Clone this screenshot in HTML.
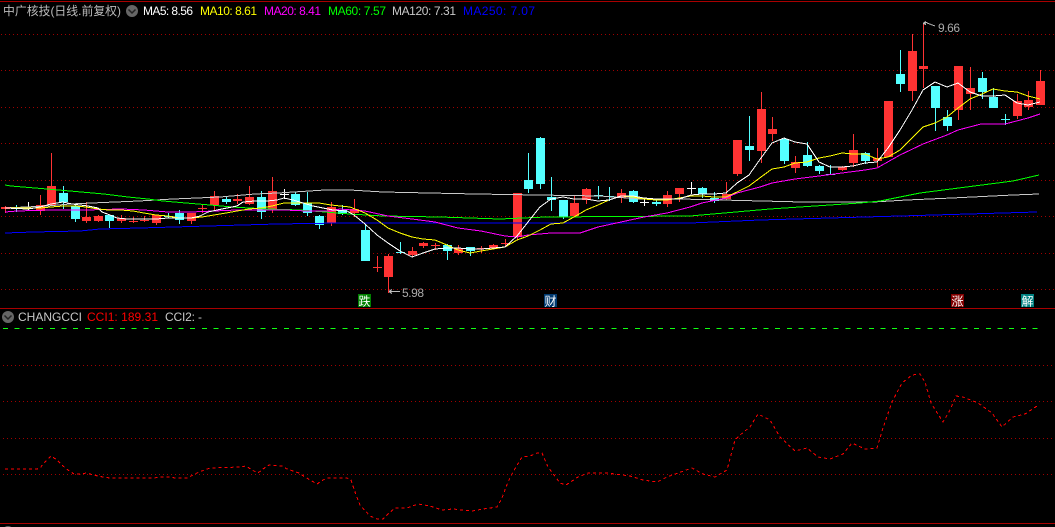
<!DOCTYPE html>
<html><head><meta charset="utf-8"><style>
html,body{margin:0;padding:0;background:#000;width:1055px;height:527px;overflow:hidden}
svg{display:block}
text{font-family:"Liberation Sans","WenQuanYi Zen Hei","Noto Sans CJK SC",sans-serif;font-size:12px}
.l{fill:none;stroke-width:1;shape-rendering:crispEdges}
</style></head><body>
<svg width="1055" height="527" viewBox="0 0 1055 527" xmlns="http://www.w3.org/2000/svg">
<rect width="1055" height="527" fill="#000"/>
<g shape-rendering="crispEdges">
<path d="M0 1.5H1055M0 308.5H1055M0 523.5H1055" stroke="#a80000" stroke-width="1" fill="none"/>
<path d="M1 34.5H1055M1 70.5H1055M1 107.5H1055M1 143.5H1055M1 180.5H1055M1 216.5H1055M1 253.5H1055M1 289.5H1055M3 365.5H1055M3 401.5H1055M3 438.5H1055M3 474.5H1055" stroke="#a00000" stroke-width="1" stroke-dasharray="1 3" fill="none"/>
<path d="M3 328.5H1042" stroke="#11ff11" stroke-width="1" stroke-dasharray="5 6.7" fill="none"/>

<path fill="none" stroke="#ff3333" stroke-width="1" d="M5.5 206V213M40.5 195V215M51.5 153V205M86.5 202V223M98.5 215V222M121.5 215V223M133.5 217V223M144.5 216V222M156.5 215V225M191.5 213V224M202.5 204V213M214.5 191V210M237.5 194V204M249.5 186V205M272.5 177V213M331.5 202V226M354.5 199V217M377.5 256V272M388.5 254V293M412.5 247V257M423.5 242V248M435.5 243V250M458.5 245V255M481.5 246V253M493.5 244V249M505.5 239V247M517.5 193V240M574.5 195V217M586.5 188V204M621.5 189V203M667.5 191V207M679.5 188V202M726.5 182V200M737.5 140V176M761.5 92V163M772.5 117V141M795.5 156V173M842.5 166V171M853.5 134V167M877.5 148V167M888.5 101V157M912.5 34V101M923.5 23V88M958.5 66V120M970.5 67V110M1017.5 94V119M1028.5 91V110M1040.5 70V105"/>
<path fill="#ff3333" d="M1 207h9v2h-9zM36 205h9v6h-9zM47 186h9v19h-9zM82 217h9v4h-9zM94 216h9v5h-9zM117 218h9v3h-9zM152 215h9v8h-9zM187 213h9v8h-9zM210 196h9v9h-9zM233 199h9v2h-9zM245 197h9v7h-9zM268 191h9v18h-9zM327 207h9v16h-9zM350 209h9v4h-9zM384 256h9v21h-9zM408 251h9v4h-9zM419 243h9v3h-9zM454 248h9v5h-9zM489 245h9v3h-9zM513 193h9v44h-9zM570 203h9v13h-9zM582 189h9v11h-9zM617 193h9v5h-9zM663 195h9v9h-9zM675 188h9v6h-9zM722 194h9v5h-9zM733 140h9v34h-9zM757 109h9v42h-9zM768 129h9v5h-9zM791 162h9v6h-9zM838 167h9v3h-9zM849 150h9v13h-9zM873 158h9v3h-9zM884 101h9v56h-9zM908 51h9v40h-9zM919 66h9v3h-9zM954 66h9v44h-9zM966 88h9v6h-9zM1013 101h9v15h-9zM1024 100h9v7h-9zM1036 81h9v24h-9z
M129 221h9v1h-9zM140 220h9v1h-9zM198 208h9v1h-9zM373 267h9v1h-9zM431 245h9v1h-9zM477 248h9v1h-9zM501 243h9v1h-9z"/>

<path fill="none" stroke="#54ffff" stroke-width="1" d="M16.5 205V212M63.5 186V209M75.5 205V222M109.5 215V228M168.5 213V218M179.5 210V224M226.5 197V204M261.5 191V219M295.5 192V206M307.5 192V216M319.5 215V229M342.5 205V215M365.5 224V261M400.5 242V254M447.5 244V260M470.5 247V256M528.5 153V193M540.5 137V189M551.5 177V211M563.5 200V219M598.5 186V199M609.5 187V201M633.5 190V203M656.5 199V206M702.5 187V198M714.5 192V203M749.5 116V161M784.5 138V164M807.5 142V167M819.5 165V174M830.5 165V175M865.5 152V164M900.5 50V92M935.5 86V131M947.5 110V131M982.5 72V99M993.5 88V108M1005.5 114V125"/>
<path fill="#54ffff" d="M59 193h9v9h-9zM71 206h9v13h-9zM105 215h9v6h-9zM175 213h9v7h-9zM222 199h9v3h-9zM257 197h9v15h-9zM291 194h9v11h-9zM303 203h9v10h-9zM315 216h9v9h-9zM338 210h9v4h-9zM361 230h9v31h-9zM443 245h9v6h-9zM466 247h9v4h-9zM524 180h9v9h-9zM536 138h9v46h-9zM547 197h9v3h-9zM559 200h9v17h-9zM629 191h9v11h-9zM652 202h9v2h-9zM698 188h9v6h-9zM710 198h9v3h-9zM745 146h9v4h-9zM780 139h9v22h-9zM803 155h9v11h-9zM815 166h9v5h-9zM861 153h9v8h-9zM896 74h9v10h-9zM931 86h9v22h-9zM943 117h9v9h-9zM978 78h9v14h-9zM989 97h9v11h-9z
M12 208h9v1h-9zM164 216h9v1h-9zM396 252h9v1h-9zM594 195h9v1h-9zM605 196h9v1h-9zM826 174h9v1h-9zM1001 119h9v1h-9z"/>

<path fill="none" stroke="#fff" stroke-width="1" d="M28.5 202V211M24 208.5h9M284.5 189V199M280 194.5h9M644.5 198V206M640 202.5h9M691.5 182V194M687 188.5h9"/>
</g>

<polyline class="l" stroke="#0000ff" points="5,233 33,232 80,231 100,229 140,228 208,226 277,224 340,223 690,223 760,220 900,216 1037,212"/>
<polyline class="l" stroke="#c8c8c8" points="5,208 47,206 70,204 92,203 115,202 139,201 173,199 197,198 220,197 255,194 278,193 325,190 350,190 383,192 476,194 600,196 640,199 680,199 803,202 873,202 907,200 952,198 1013,195 1039,194"/>
<polyline class="l" stroke="#00ff00" points="5,185 11,186 35,188 47,189 70,191 104,194 128,197 148,199 163,201 186,203 210,205 232,207 267,209 300,210 325,212 350,214 383,216 440,217 500,219 546,217 690,216 770,209 800,207 860,203 880,201 920,193 1013,181 1039,175"/>
<polyline class="l" stroke="#ff00ff" points="5,212 17,211 51,210 86,210 121,209 144,210 168,212 191,212 214,211 237,210 261,210 284,210 307,211 330,211 340,209 365,211 388,216 412,219 435,222 458,228 481,231 505,236 517,237 528,235 551,233 580,233 598,227 621,222 644,217 667,213 690,207 702,203 726,198 737,193 760,187 772,183 795,179 819,176 842,173 865,170 877,168 900,155 923,144 947,135 958,130 981,124 1005,124 1028,118 1040,114"/>
<polyline class="l" stroke="#ffff00" points="5,208 28,208 40,208 51,207 63,206 75,206 86,207 98,209 109,210 121,210 133,211 144,213 156,215 168,216 179,218 191,218 202,217 214,215 226,213 237,211 249,209 261,208 272,206 284,203 295,203 307,203 319,203 331,205 340,206 350,207 365,213 377,220 388,228 400,233 412,237 423,239 435,240 447,245 458,250 470,253 481,251 493,249 505,247 517,240 528,236 540,230 551,224 563,223 574,217 586,210 598,205 609,200 621,196 633,197 644,199 656,200 667,200 679,198 691,196 702,196 714,197 726,197 737,192 749,186 761,177 772,169 784,167 795,163 807,162 819,158 830,156 842,153 853,154 865,154 877,159 888,157 900,150 912,138 923,127 935,123 947,117 958,108 970,99 982,94 993,89 1005,91 1017,92 1028,96 1040,99"/>
<polyline class="l" stroke="#ffffff" points="5,208 28,209 40,207 51,204 63,202 72,204 88,206 98,208 102,212 110,215 117,218 127,219 144,219 156,219 168,218 179,218 191,218 200,216 208,212 217,210 227,208 237,206 243,202 255,201 267,201 277,200 284,198 293,200 303,203 313,206 323,208 333,210 347,211 354,215 365,224 377,235 388,243 400,251 412,257 423,253 435,249 447,248 458,248 470,249 481,249 493,248 505,247 517,236 528,222 540,207 551,199 563,197 574,199 586,199 598,201 609,200 621,196 633,196 644,198 656,199 667,199 679,199 691,195 702,194 714,194 726,193 737,183 749,175 761,158 772,143 784,138 795,142 807,144 819,162 830,167 842,167 853,166 865,163 877,162 888,148 900,130 912,110 923,90 935,82 947,87 958,83 970,92 982,96 993,96 1005,95 1017,103 1028,105 1040,102"/>

<g shape-rendering="crispEdges">
<polyline fill="none" stroke="#ff0000" stroke-width="1" stroke-dasharray="3 3" points="5,469 37,469 40,468 45,462 51,456 57,460 63,466 68,470 74,474 80,474 87,473 93,475 103,477 110,478 127,478 153,478 163,477 170,477 175,478 187,478 193,475 199,472 210,468 240,467 246,466 252,470 258,473 263,469 269,465 282,466 287,469 299,473 305,477 317,484 323,480 328,478 347,478 351,480 355,492 360,505 370,516 377,519 383,519 388,514 395,508 407,508 418,504 430,506 442,510 453,509 472,511 483,509 497,507 502,498 508,482 513,472 522,457 530,456 537,453 542,453 548,467 560,483 566,485 578,477 588,473 607,473 630,476 643,480 657,482 667,477 692,468 703,474 715,477 727,470 735,440 740,435 750,427 758,414 770,420 780,437 795,451 807,448 818,457 830,459 843,454 852,443 865,449 877,448 883,428 892,402 902,383 912,375 920,374 925,382 931,403 943,422 950,410 956,396 963,397 978,403 992,413 1002,427 1013,417 1025,414 1037,406"/>
<rect x="358" y="294" width="13" height="13" fill="#008000"/>
<rect x="544" y="294" width="13" height="13" fill="#003a70"/>
<rect x="951" y="294" width="13" height="13" fill="#800000"/>
<rect x="1021" y="294" width="13" height="13" fill="#008080"/>
<path d="M389 291.5H400M389 291.5l3-2M389 291.5l3 2" stroke="#bbb" fill="none"/>
<path d="M923 23.5l4-1M923 23.5l3-2M923 23.5l3 1M927 23l8 3" stroke="#bbb" fill="none"/>
</g>

<text x="3" y="15" fill="#bbbbbb" textLength="118" lengthAdjust="spacingAndGlyphs">中广核技(日线.前复权)</text>
<circle cx="132" cy="11" r="6" fill="#666"/>
<path d="M128.5 9.5l3.5 3.5 3.5-3.5" stroke="#222" stroke-width="1.5" fill="none"/>
<text x="143" y="15" fill="#fff" textLength="50">MA5: 8.56</text>
<text x="200" y="15" fill="#ff0" textLength="57">MA10: 8.61</text>
<text x="264" y="15" fill="#f0f" textLength="57">MA20: 8.41</text>
<text x="328" y="15" fill="#0f0" textLength="58">MA60: 7.57</text>
<text x="392" y="15" fill="#c8c8c8" textLength="64">MA120: 7.31</text>
<text x="463" y="15" fill="#0000ff" textLength="72">MA250: 7.07</text>

<text x="402" y="297" fill="#aaa" textLength="22">5.98</text>
<text x="938" y="32" fill="#aaa" textLength="22">9.66</text>

<text x="358.5" y="305.5" fill="#fff" style="font-size:12px">跌</text>
<text x="544.5" y="305.5" fill="#fff" style="font-size:12px">财</text>
<text x="951.5" y="305.5" fill="#fff" style="font-size:12px">涨</text>
<text x="1021.5" y="305.5" fill="#fff" style="font-size:12px">解</text>

<circle cx="8" cy="317" r="6" fill="#666"/>
<path d="M4.5 315.5l3.5 3.5 3.5-3.5" stroke="#222" stroke-width="1.5" fill="none"/>
<text x="18" y="321" fill="#c8c8c8" textLength="64">CHANGCCI</text>
<text x="87" y="321" fill="#f00" textLength="71">CCI1: 189.31</text>
<text x="165" y="321" fill="#c8c8c8" textLength="37">CCI2: -</text>
<circle cx="8" cy="532" r="6" fill="#666"/>
</svg>
</body></html>
